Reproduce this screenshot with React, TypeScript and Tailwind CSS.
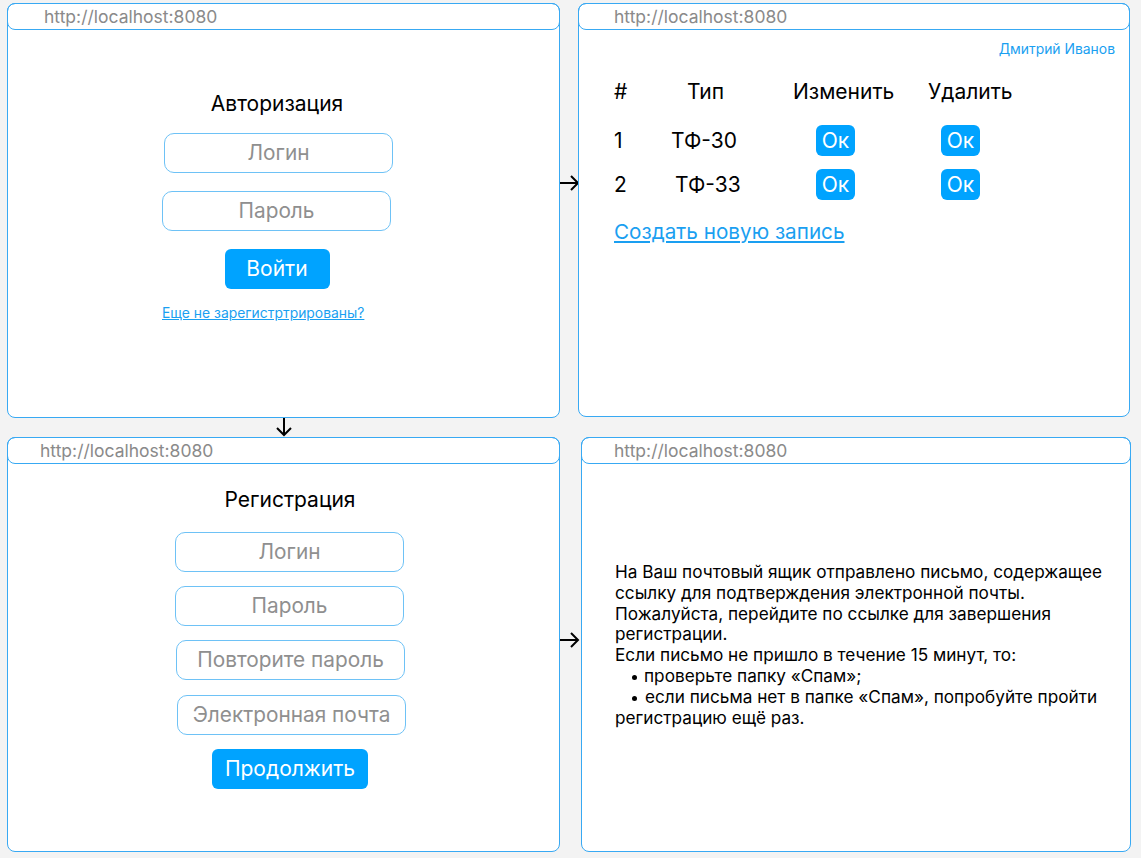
import type { ReactNode } from "react";

function BrowserWindow({
  className,
  urlPad,
  children,
}: {
  className: string;
  urlPad: string;
  children: ReactNode;
}) {
  return (
    <div
      className={
        "flex flex-col rounded-[8px] border border-[#38a9f3] bg-white " +
        className
      }
    >
      <div
        className={
          "-mx-px -mt-px flex h-[27px] shrink-0 items-center rounded-[8px] border border-[#38a9f3] text-[17.5px] leading-[20px] text-[#8a8a8a] " +
          urlPad
        }
      >
        http://localhost:8080
      </div>
      {children}
    </div>
  );
}

function Field({ label, className = "" }: { label: string; className?: string }) {
  return (
    <div
      className={
        "flex h-[40px] w-[229px] items-center justify-center whitespace-nowrap rounded-[10px] border border-[#6ec2f6] text-[20.8px] text-[#8f8f8f] " +
        className
      }
    >
      {label}
    </div>
  );
}

function OkButton() {
  return (
    <div className="flex h-[31px] w-[39px] items-center justify-center rounded-[6px] bg-[#00a3ff] text-[21px] text-white">
      Ок
    </div>
  );
}

function ArrowRight() {
  return (
    <svg width="20" height="16" viewBox="0 0 20 16" fill="none">
      <path d="M0 8h18M11 1l7 7-7 7" stroke="#000" strokeWidth="2" />
    </svg>
  );
}

function ArrowDown() {
  return (
    <svg width="16" height="19" viewBox="0 0 16 19" fill="none">
      <path d="M8 0v17M1 10l7 7 7-7" stroke="#000" strokeWidth="2" />
    </svg>
  );
}

export default function App() {
  return (
    <div
      className="min-h-[858px] w-[1141px] bg-[#f3f3f3] pl-[7px] pt-[3px] text-black"
      style={{ fontFamily: "Inter, 'Noto Sans', sans-serif" }}
    >
      {/* Top row: login -> table */}
      <div className="flex items-start">
        <BrowserWindow className="h-[415px] w-[553px]" urlPad="pl-[36px]">
          <div className="ml-[154px] flex w-[230px] flex-col pt-[62px]">
            <div className="h-[24px] whitespace-nowrap text-center text-[21px] leading-[24px]">
              Авторизация
            </div>
            <Field label="Логин" className="ml-[2px] mt-[17px]" />
            <Field label="Пароль" className="mt-[18px]" />
            <div className="mt-[18px] flex h-[40px] w-[105px] items-center justify-center self-center rounded-[6px] bg-[#00a3ff] text-[21px] text-white">
              Войти
            </div>
            <div className="mt-[16px] whitespace-nowrap text-[13.9px] leading-[16px] text-[#1a9ff1] underline">
              Еще не зарегистртрированы?
            </div>
          </div>
        </BrowserWindow>

        <div className="w-[18px] pt-[172px]">
          <ArrowRight />
        </div>

        <BrowserWindow className="h-[414px] w-[552px]" urlPad="pl-[35px]">
          <div className="flex flex-col pl-[35px] pr-[14px]">
            <div className="mt-[11px] self-end text-[13.9px] leading-[16px] text-[#1a9ff1]">
              Дмитрий Иванов
            </div>
            <div className="mt-[23px] flex h-[24px] items-center text-[21px] leading-[24px]">
              <div className="w-[57px]">#</div>
              <div className="w-[122px] pl-[16px]">Тип</div>
              <div className="w-[135px]">Изменить</div>
              <div>Удалить</div>
            </div>
            <div className="mt-[21px] flex h-[31px] items-center text-[21px]">
              <div className="w-[57px]">1</div>
              <div className="w-[122px]">ТФ-30</div>
              <div className="w-[135px] pl-[23px]">
                <OkButton />
              </div>
              <div className="pl-[13px]">
                <OkButton />
              </div>
            </div>
            <div className="mt-[13px] flex h-[31px] items-center text-[21px]">
              <div className="w-[57px]">2</div>
              <div className="w-[122px] pl-[4px]">ТФ-33</div>
              <div className="w-[135px] pl-[23px]">
                <OkButton />
              </div>
              <div className="pl-[13px]">
                <OkButton />
              </div>
            </div>
            <div className="mt-[20px] self-start text-[20.7px] leading-[24px] text-[#1a9ff1] underline">
              Создать новую запись
            </div>
          </div>
        </BrowserWindow>
      </div>

      {/* Arrow down */}
      <div className="flex h-[19px] items-center pl-[269px]">
        <ArrowDown />
      </div>

      {/* Bottom row: registration -> confirmation */}
      <div className="flex items-start">
        <BrowserWindow className="h-[415px] w-[553px]" urlPad="pl-[32px]">
          <div className="ml-[167px] flex w-[230px] flex-col pt-[24px]">
            <div className="h-[24px] whitespace-nowrap text-center text-[21px] leading-[24px]">
              Регистрация
            </div>
            <Field label="Логин" className="mt-[20px]" />
            <Field label="Пароль" className="mt-[14px]" />
            <Field label="Повторите пароль" className="ml-[1px] mt-[14px]" />
            <Field label="Электронная почта" className="ml-[2px] mt-[15px]" />
            <div className="mt-[14px] flex h-[40px] w-[156px] items-center justify-center self-center rounded-[6px] bg-[#00a3ff] text-[21px] text-white">
              Продолжить
            </div>
          </div>
        </BrowserWindow>

        <div className="w-[21px] pt-[195px]">
          <ArrowRight />
        </div>

        <BrowserWindow className="h-[415px] w-[550px]" urlPad="pl-[32px]">
          <div className="pl-[33px] pt-[98px] text-[17.2px] leading-[20.8px]">
            <div className="whitespace-nowrap">
              На Ваш почтовый ящик отправлено письмо, содержащее
            </div>
            <div className="whitespace-nowrap">
              ссылку для подтверждения электронной почты.
            </div>
            <div className="whitespace-nowrap">
              Пожалуйста, перейдите по ссылке для завершения
            </div>
            <div className="whitespace-nowrap">регистрации.</div>
            <div className="whitespace-nowrap">
              Если письмо не пришло в течение 15 минут, то:
            </div>
            <div className="flex items-center whitespace-nowrap pl-[17px]">
              <span className="mr-[7px] mt-[3px] inline-block h-[5px] w-[5px] rounded-full bg-black" />
              проверьте папку «Спам»;
            </div>
            <div className="flex items-center whitespace-nowrap pl-[17px]">
              <span className="mr-[8px] mt-[3px] inline-block h-[5px] w-[5px] rounded-full bg-black" />
              если письма нет в папке «Спам», попробуйте пройти
            </div>
            <div className="whitespace-nowrap">регистрацию ещё раз.</div>
          </div>
        </BrowserWindow>
      </div>
    </div>
  );
}
